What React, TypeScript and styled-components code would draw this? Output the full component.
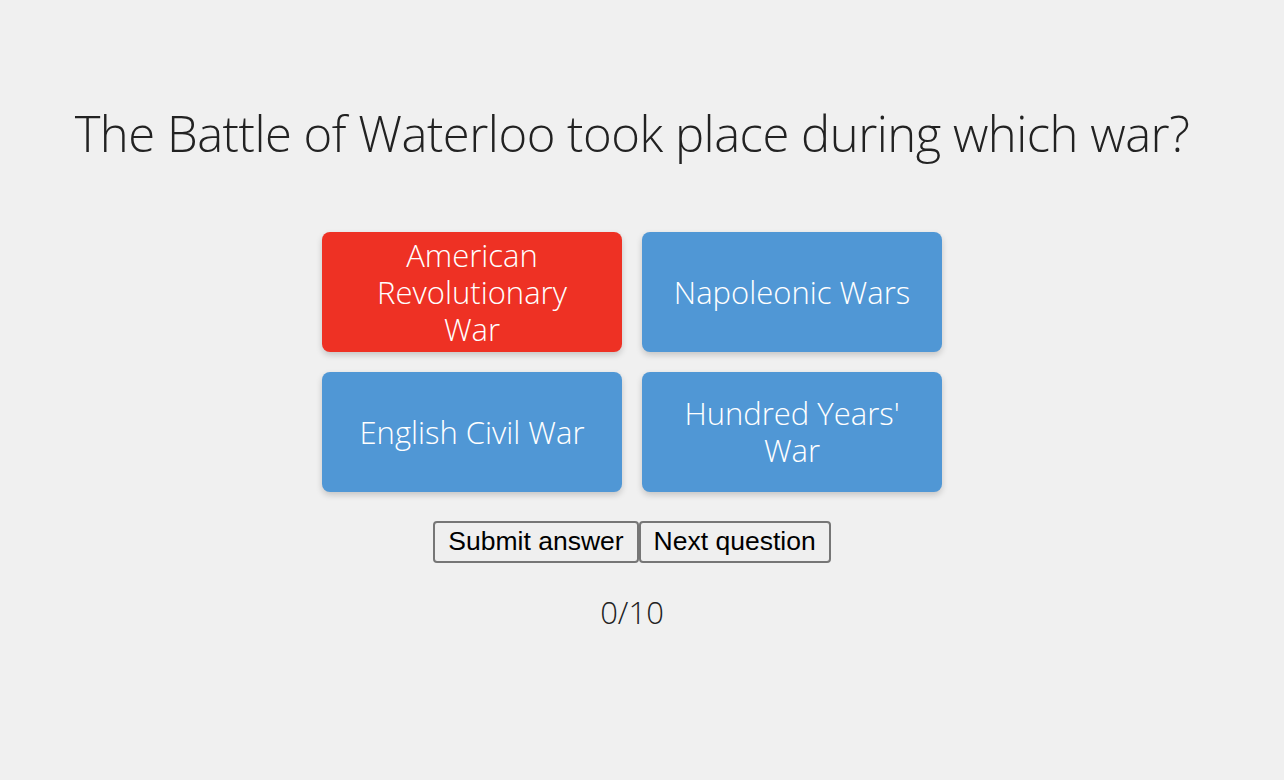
import styled, { createGlobalStyle } from "styled-components";

const GlobalStyle = createGlobalStyle`
  html, body {
    margin: 0;
    padding: 0;
    background: #f0f0f0;
  }
  body {
    font-family: "Open Sans", "Noto Sans", sans-serif;
    font-weight: 300;
  }
`;

const answers = [
  { label: "American Revolutionary War", selected: true },
  { label: "Napoleonic Wars", selected: false },
  { label: "English Civil War", selected: false },
  { label: "Hundred Years' War", selected: false },
];

const Page = styled.main`
  width: 1264px;
  height: 780px;
  display: flex;
  flex-direction: column;
  align-items: center;
  padding-top: 101px;
  box-sizing: border-box;
`;

const Question = styled.h1`
  margin: 0;
  font-family: "Open Sans", sans-serif;
  font-weight: 300;
  font-size: 49px;
  line-height: 64px;
  letter-spacing: -0.5px;
  color: #222;
  white-space: nowrap;
`;

const AnswerGrid = styled.div`
  display: grid;
  grid-template-columns: repeat(2, 300px);
  grid-auto-rows: 120px;
  gap: 20px;
  margin-top: 67px;
`;

const Answer = styled.button<{ $selected: boolean }>`
  border: none;
  border-radius: 8px;
  background: ${({ $selected }) => ($selected ? "#ee3124" : "#5097d5")};
  color: #fff;
  font-family: "Open Sans", sans-serif;
  font-weight: 300;
  font-size: 31px;
  line-height: 37px;
  padding: 0 29px;
  box-shadow: 0 3px 6px rgba(0, 0, 0, 0.18);
  cursor: pointer;
`;

const Actions = styled.div`
  display: flex;
  margin-top: 29px;
`;

const ActionButton = styled.button`
  font-family: "Liberation Sans", Arial, sans-serif;
  font-size: 26.5px;
  line-height: 29px;
  padding: 4px 13px 5px;
  color: #000;
  background: #efefef;
  border: 2px solid #767676;
  border-radius: 4px;
`;

const Score = styled.p`
  margin: 29px 0 0;
  font-family: "Open Sans", sans-serif;
  font-weight: 300;
  font-size: 31px;
  line-height: 40px;
  color: #222;
`;

export default function App() {
  return (
    <>
      <GlobalStyle />
      <Page>
        <Question>The Battle of Waterloo took place during which war?</Question>
        <AnswerGrid>
          {answers.map((a) => (
            <Answer key={a.label} $selected={a.selected}>
              {a.label}
            </Answer>
          ))}
        </AnswerGrid>
        <Actions>
          <ActionButton>Submit answer</ActionButton>
          <ActionButton>Next question</ActionButton>
        </Actions>
        <Score>0/10</Score>
      </Page>
    </>
  );
}
